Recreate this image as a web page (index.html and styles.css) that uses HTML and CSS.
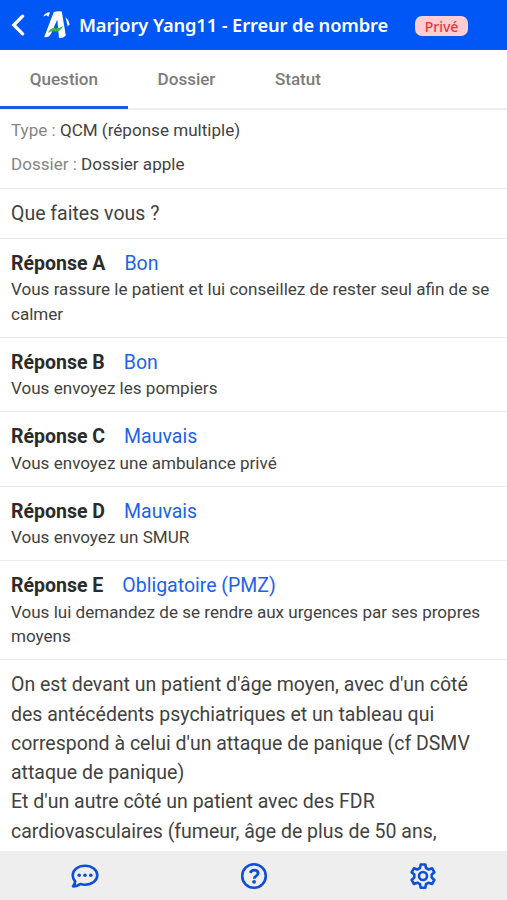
FILE: index.html
```html
<!DOCTYPE html>
<html lang="fr">
<head>
<meta charset="utf-8">
<title>Marjory Yang11 - Erreur de nombre</title>
<link rel="stylesheet" href="styles.css">
</head>
<body>
<header class="topbar">
  <svg class="back" viewBox="0 0 14 22"><path d="M11.600 2.200 2.800 11l8.800 8.800" fill="none" stroke="#fff" stroke-width="3.300" stroke-linecap="round"/></svg>
  <svg class="logo" viewBox="0 0 28 30">
    <g fill="#fff">
      <path d="M10.800 2Q14.500 .8 18.800 1.500L22.800 25.500Q20 28.600 16 28L15 17.500 14.300 9.500 8.200 23.500Q5 28.500 1.200 27Z"/>
      <path d="M.2 6.500Q2 2.400 7 2.200L5.400 6.700 3.400 5.300Z"/>
      <path d="M22.500 7.200Q26 10 26.400 14.200L24.800 16.500Z"/>
    </g>
    <path d="M4.800 23Q7.500 17.200 12.500 18.200 16 18.500 20.200 16 17.500 21.900 12 21.500 8 20.600 4.800 23Z" fill="#43b54a"/>
  </svg>
  <h1 class="title">Marjory Yang11 - Erreur de nombre</h1>
  <span class="badge">Privé</span>
</header>
<nav class="tabs">
  <a class="tab tab-active">Question</a>
  <a class="tab">Dossier</a>
  <a class="tab">Statut</a>
</nav>
<main class="content">
  <section class="meta">
    <p><span class="label">Type :</span> QCM (réponse multiple)</p>
    <p><span class="label">Dossier :</span> Dossier apple</p>
  </section>
  <section class="question">Que faites vous ?</section>
  <section class="answer">
    <div class="head"><b>Réponse A</b><span class="mark">Bon</span></div>
    <p>Vous rassure le patient et lui conseillez de rester seul afin de se<br>calmer</p>
  </section>
  <section class="answer">
    <div class="head"><b>Réponse B</b><span class="mark">Bon</span></div>
    <p>Vous envoyez les pompiers</p>
  </section>
  <section class="answer">
    <div class="head"><b>Réponse C</b><span class="mark">Mauvais</span></div>
    <p>Vous envoyez une ambulance privé</p>
  </section>
  <section class="answer">
    <div class="head"><b>Réponse D</b><span class="mark">Mauvais</span></div>
    <p>Vous envoyez un SMUR</p>
  </section>
  <section class="answer">
    <div class="head"><b>Réponse E</b><span class="mark">Obligatoire (PMZ)</span></div>
    <p>Vous lui demandez de se rendre aux urgences par ses propres<br>moyens</p>
  </section>
  <section class="comment">On est devant un patient d'âge moyen, avec d'un côté<br>des antécédents psychiatriques et un tableau qui<br>correspond à celui d'un attaque de panique (cf DSMV<br>attaque de panique)<br>Et d'un autre côté un patient avec des FDR<br>cardiovasculaires (fumeur, âge de plus de 50 ans,</section>
</main>
<footer class="bottombar">
  <a class="action"><svg viewBox="0 0 28 28"><path d="M14 3.700c6.900 0 12.300 4.200 12.300 9.500S20.900 22.700 14 22.700c-1.700 0-3.300-.25-4.700-.7C7.400 23.500 5 24.500 2 24.300c1.400-1.500 2-3 2.200-4.800C2.600 17.800 1.700 15.600 1.700 13.200c0-5.300 5.400-9.500 12.300-9.500Z" fill="none" stroke="currentColor" stroke-width="2.600" stroke-linejoin="round"/><g fill="currentColor"><circle cx="8.200" cy="13.200" r="1.800"/><circle cx="14" cy="13.200" r="1.800"/><circle cx="19.800" cy="13.200" r="1.800"/></g></svg></a>
  <a class="action"><svg viewBox="0 0 28 28"><circle cx="14" cy="14" r="11.800" fill="none" stroke="currentColor" stroke-width="2.600"/><path d="M10.200 10.900C11 9 12.300 8.100 14.200 8.100c2.200 0 3.900 1.300 3.900 3.200 0 2.900-3.900 2.800-3.900 5.400" fill="none" stroke="currentColor" stroke-width="2.900"/><circle cx="14.100" cy="19.800" r="1.900" fill="currentColor"/></svg></a>
  <a class="action"><svg viewBox="0 0 28 28"><path d="M11.700 2.500h4.600l.7 3.500 2.700 1.500 3.400-1.200 2.300 4-2.700 2.300v3l2.700 2.300-2.300 4-3.400-1.200-2.700 1.500-.7 3.500h-4.600l-.7-3.500-2.700-1.500-3.400 1.200-2.300-4 2.700-2.300v-3l-2.700-2.300 2.300-4 3.400 1.200L11 6Z" fill="none" stroke="currentColor" stroke-width="2.600" stroke-linejoin="round"/><circle cx="14" cy="14" r="4" fill="none" stroke="currentColor" stroke-width="2.600"/></svg></a>
</footer>
</body>
</html>
```

FILE: styles.css
```css
* { box-sizing: border-box; }
body {
  margin: 0;
  height: 900px;
  display: flex;
  flex-direction: column;
  overflow: hidden;
  background: #fff;
  color: #424242;
  font-family: Roboto, sans-serif;
  font-size: 17.07px;
  line-height: 24.4px;
}
p { margin: 0; }
.topbar {
  height: 50px;
  flex: none;
  display: flex;
  align-items: center;
  padding-left: 11px;
  background: #0057f5;
  color: #fff;
  font-family: "Noto Sans", sans-serif;
}
.back { width: 14px; height: 22px; flex: none; }
.logo { width: 28px; height: 30px; margin-left: 18px; flex: none; }
.title {
  margin: 1px 0 0 8px;
  width: 309px;
  font-size: 18.3px;
  font-weight: 600;
  letter-spacing: -0.11px;
  white-space: nowrap;
}
.badge {
  width: 53px;
  height: 20px;
  margin: 1px 0 0 27px;
  border-radius: 7px;
  background: #ffcdd2;
  color: #e53935;
  font-size: 14px;
  font-weight: 500;
  line-height: 22px;
  text-align: center;
}
.tabs {
  height: 60px;
  flex: none;
  display: flex;
  border-bottom: 2px solid #eee;
}
.tab {
  height: 59px;
  padding: 0 29.800px;
  color: #7c7c7c;
  font-weight: 500;
  letter-spacing: -0.02px;
  line-height: 59px;
}
.tab-active { border-bottom: 3px solid #1c5be0; }
.content { flex: 1; min-height: 0; overflow: hidden; }
.content > section {
  padding: 9.900px 11px 9.950px;
  border-bottom: 1px solid #eaeaea;
}
.content > .meta {
  height: 79px;
  padding-top: 8px;
  display: grid;
  gap: 9.800px;
  align-content: start;
}
.content > .answer { padding-bottom: 10.750px; }
.answer p { margin-top: -0.8px; }
.label { color: #858585; }
.content > .question, .head, .content > .comment {
  font-size: 19.500px;
  line-height: 29.250px;
}
.head { display: flex; gap: 19px; }
.head b { color: #2b2b2b; }
.mark { color: #1b63ea; }
.content > .comment { border: 0; }
.bottombar {
  height: 49px;
  flex: none;
  display: grid;
  grid-template-columns: repeat(3, 1fr);
  background: #eee;
  color: #0d4fd8;
}
.action { display: flex; align-items: center; justify-content: center; }
.action svg { width: 28px; height: 28px; }
```
